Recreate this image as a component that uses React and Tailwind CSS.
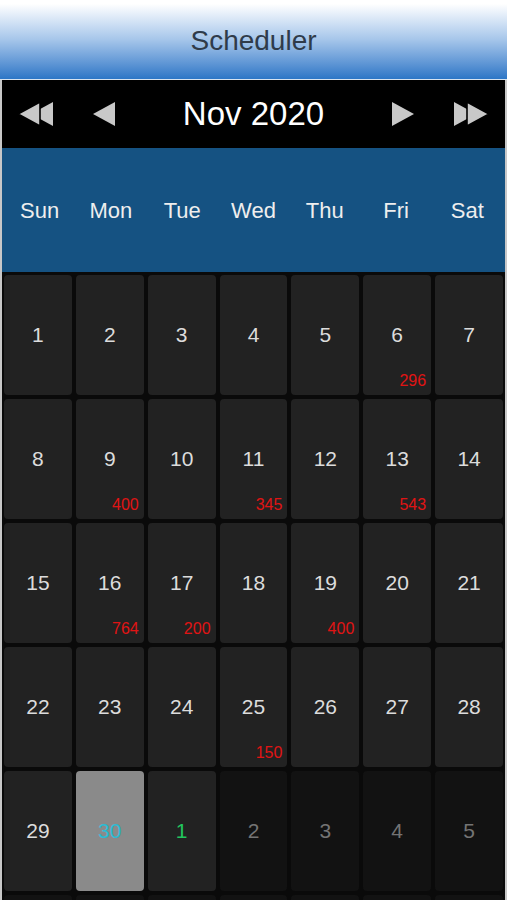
import React from "react";

const weekDays = ["Sun", "Mon", "Tue", "Wed", "Thu", "Fri", "Sat"];

const counts = { 6: 296, 9: 400, 11: 345, 13: 543, 16: 764, 17: 200, 19: 400, 25: 150 };

function buildDays() {
  const days = [];
  for (let d = 1; d <= 30; d++) days.push({ day: d, type: "cur" });
  for (let d = 1; d <= 5; d++) days.push({ day: d, type: "next" });
  // next row only peeks in at the bottom edge
  for (let d = 6; d <= 12; d++) days.push({ day: d, type: "next", hidden: true });
  return days;
}

function DoubleArrow({ dir }) {
  return (
    <svg width="36" height="24" viewBox="0 0 36 24">
      <g transform={dir === "left" ? "scale(-1,1) translate(-36,0)" : undefined}>
        <polygon points="0,0 22,12 0,24" fill="#c8c8c8" />
        <polygon points="13,0 35,12 13,24" fill="#c8c8c8" stroke="#000" strokeWidth="1.6" />
      </g>
    </svg>
  );
}

function SingleArrow({ dir }) {
  return (
    <svg width="22" height="24" viewBox="0 0 22 24">
      <g transform={dir === "left" ? "scale(-1,1) translate(-22,0)" : undefined}>
        <polygon points="0,0 22,12 0,24" fill="#c8c8c8" />
      </g>
    </svg>
  );
}

function DayCell({ item }) {
  const { day, type, hidden } = item;
  const isSelected = type === "cur" && day === 30;
  const isToday = type === "next" && day === 1;

  let cellClass = "bg-[#222222] text-[#dcdcdc]";
  if (isSelected) cellClass = "bg-[#8a8a8a] text-[#2bbcd4]";
  else if (isToday) cellClass = "bg-[#222222] text-[#22c55e]";
  else if (type === "next") cellClass = "bg-[#121212] text-[#747474]";

  const count = type === "cur" ? counts[day] : null;

  return (
    <div className={`relative h-[120px] rounded-[4px] flex items-center justify-center text-[21px] ${cellClass}`}>
      {!hidden && day}
      {count && (
        <span className="absolute right-[5px] bottom-[6px] text-[16px] leading-none text-[#e01414]">
          {count}
        </span>
      )}
    </div>
  );
}

export default function App() {
  const days = buildDays();

  return (
    <div className="w-[507px] h-[900px] overflow-hidden bg-black font-['Liberation_Sans',Arial,sans-serif]">
      {/* Title bar */}
      <div className="h-[80px] flex items-center justify-center pt-[2px] bg-gradient-to-b from-white from-[5%] via-[#a6c6ea] to-[#2b76c6] border-b border-[#d8e4f0]">
        <h1 className="text-[28px] text-[#2f3b4a]">Scheduler</h1>
      </div>

      <div className="border-x-2 border-[#c8c8c8] bg-black h-[820px]">
        {/* Month nav */}
        <div className="h-[68px] flex items-center justify-between px-[15px]">
          <div className="flex items-center gap-[40px]">
            <DoubleArrow dir="left" />
            <SingleArrow dir="left" />
          </div>
          <div className="text-[33px] text-white">Nov 2020</div>
          <div className="flex items-center gap-[40px]">
            <SingleArrow dir="right" />
            <DoubleArrow dir="right" />
          </div>
        </div>

        {/* Week days */}
        <div className="h-[124px] bg-[#155282] grid grid-cols-7 items-center px-[2px]">
          {weekDays.map((w) => (
            <div key={w} className="text-center text-[22px] text-[#eeeeee]">
              {w}
            </div>
          ))}
        </div>

        {/* Days */}
        <div className="grid grid-cols-7 gap-[4px] px-[2px] pt-[3px] bg-[#0a0a0a]">
          {days.map((item, i) => (
            <DayCell key={i} item={item} />
          ))}
        </div>
      </div>
    </div>
  );
}
